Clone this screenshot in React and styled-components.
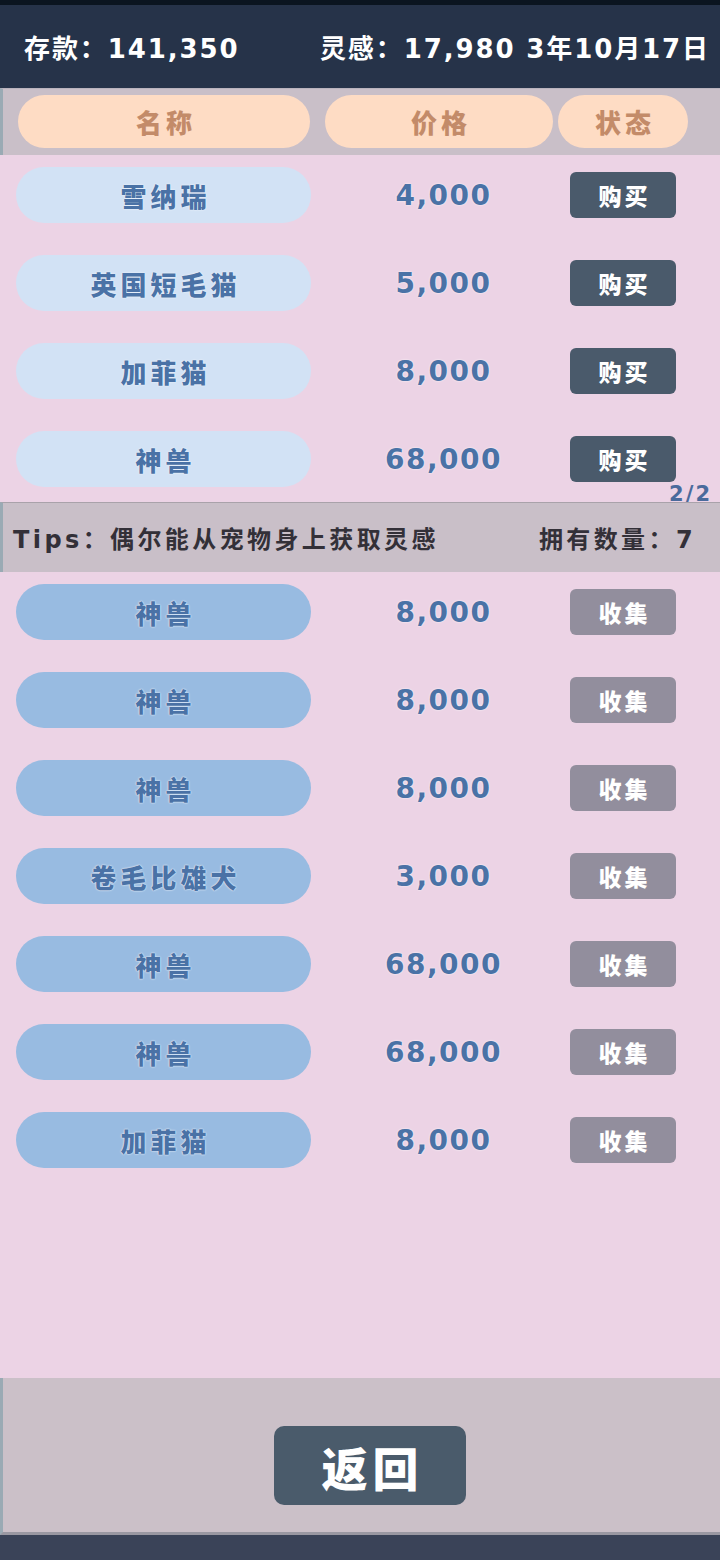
import React from 'react';
import styled, { createGlobalStyle } from 'styled-components';

const GlobalStyle = createGlobalStyle`
  body {
    margin: 0;
    background: #ecd3e5;
    font-family: "DejaVu Sans", "Noto Sans CJK SC", sans-serif;
  }
`;

const Page = styled.div`
  width: 720px;
  height: 1560px;
  display: flex;
  flex-direction: column;
  background: #ecd3e5;
  overflow: hidden;
`;

const TopStrip = styled.div`
  height: 5px;
  background: #0b1520;
`;

const Header = styled.div`
  height: 83px;
  background: #263349;
  display: flex;
  align-items: center;
  justify-content: space-between;
  padding: 0 10px 0 24px;
  color: #ffffff;
  font-size: 26px;
  font-weight: 700;
  letter-spacing: 1.9px;
`;

const ColumnHeader = styled.div`
  height: 67px;
  box-sizing: border-box;
  background: #c9bfc8;
  border-left: 3px solid #9aaab4;
  border-top: 1px solid #b9b3bd;
  display: flex;
  padding: 6px 0 0 15px;
`;

const HeadPill = styled.div`
  width: ${p => p.w}px;
  margin-right: ${p => p.gap || 0}px;
  height: 53px;
  border-radius: 27px;
  background: #fedcc4;
  color: #c38b69;
  font-size: 26px;
  font-weight: 900;
  letter-spacing: 4px;
  text-indent: 4px;
  display: flex;
  align-items: center;
  justify-content: center;
`;

const List = styled.div`
  display: flex;
  flex-direction: column;
  gap: 32px;
  padding-top: 12px;
`;

const Row = styled.div`
  height: 56px;
  display: flex;
  align-items: center;
  padding-left: 16px;
`;

const NamePill = styled.div`
  width: 295px;
  height: 56px;
  border-radius: 28px;
  background: ${p => (p.owned ? '#98bbe1' : '#d2e2f5')};
  color: #4a72a6;
  font-size: 26px;
  font-weight: 900;
  letter-spacing: 4px;
  text-indent: 4px;
  display: flex;
  align-items: center;
  justify-content: center;
  text-shadow: 0 0 2px #eef4fb, 0 0 1px #ffffff;
`;

const Price = styled.div`
  flex: 1;
  text-align: center;
  padding-left: 6px;
  color: #4a72a6;
  font-size: 28px;
  font-weight: 700;
  letter-spacing: 1.5px;
  text-shadow: 0 0 2px #ffffff;
`;

const ActionButton = styled.div`
  width: 106px;
  height: 46px;
  margin-right: 44px;
  border-radius: 6px;
  background: ${p => (p.muted ? '#928e9d' : '#4a5a6b')};
  color: #ffffff;
  font-size: 23px;
  font-weight: 900;
  letter-spacing: 3px;
  text-indent: 3px;
  display: flex;
  align-items: center;
  justify-content: center;
`;

const ShopSection = styled.div`
  height: 347px;
  display: flex;
  flex-direction: column;
  justify-content: space-between;
`;

const Pager = styled.div`
  height: 14px;
  line-height: 12px;
  text-align: right;
  padding-right: 8px;
  color: #4a6a9c;
  font-size: 21px;
  font-weight: 700;
  letter-spacing: 2px;
`;

const TipsBar = styled.div`
  height: 70px;
  box-sizing: border-box;
  background: #c9bfc8;
  border-top: 1px solid #a9a2aa;
  border-left: 3px solid #9aaab4;
  display: flex;
  align-items: center;
  justify-content: space-between;
  padding: 0 24px 0 10px;
  color: #333038;
  font-size: 24px;
  font-weight: 700;
  letter-spacing: 3.4px;
`;

const OwnedSection = styled.div`
  flex: 1;
`;

const Footer = styled.div`
  height: 157px;
  box-sizing: border-box;
  background: #cbc0c8;
  border-left: 3px solid #9aaab4;
  border-bottom: 3px solid #9a98a2;
  display: flex;
  justify-content: center;
  padding: 48px 0 0 17px;
`;

const BackButton = styled.div`
  width: 192px;
  height: 79px;
  border-radius: 10px;
  background: #4a5b6b;
  color: #ffffff;
  font-size: 46px;
  font-weight: 900;
  letter-spacing: 5px;
  text-indent: 5px;
  display: flex;
  align-items: center;
  justify-content: center;
`;

const BottomStrip = styled.div`
  height: 25px;
  background: #3a4358;
`;

const shop = [
  { name: '雪纳瑞', price: '4,000' },
  { name: '英国短毛猫', price: '5,000' },
  { name: '加菲猫', price: '8,000' },
  { name: '神兽', price: '68,000' },
];

const owned = [
  { name: '神兽', price: '8,000' },
  { name: '神兽', price: '8,000' },
  { name: '神兽', price: '8,000' },
  { name: '卷毛比雄犬', price: '3,000' },
  { name: '神兽', price: '68,000' },
  { name: '神兽', price: '68,000' },
  { name: '加菲猫', price: '8,000' },
];

export default function App() {
  return (
    <Page>
      <GlobalStyle />
      <TopStrip />
      <Header>
        <span>存款：141,350</span>
        <span>灵感：17,980 3年10月17日</span>
      </Header>
      <ColumnHeader>
        <HeadPill w={292} gap={15}>名称</HeadPill>
        <HeadPill w={228} gap={5}>价格</HeadPill>
        <HeadPill w={130}>状态</HeadPill>
      </ColumnHeader>
      <ShopSection>
        <List>
          {shop.map((item, i) => (
            <Row key={i}>
              <NamePill>{item.name}</NamePill>
              <Price>{item.price}</Price>
              <ActionButton>购买</ActionButton>
            </Row>
          ))}
        </List>
        <Pager>2/2</Pager>
      </ShopSection>
      <TipsBar>
        <span>Tips：偶尔能从宠物身上获取灵感</span>
        <span>拥有数量：7</span>
      </TipsBar>
      <OwnedSection>
        <List>
          {owned.map((item, i) => (
            <Row key={i}>
              <NamePill owned>{item.name}</NamePill>
              <Price>{item.price}</Price>
              <ActionButton muted>收集</ActionButton>
            </Row>
          ))}
        </List>
      </OwnedSection>
      <Footer>
        <BackButton>返回</BackButton>
      </Footer>
      <BottomStrip />
    </Page>
  );
}
